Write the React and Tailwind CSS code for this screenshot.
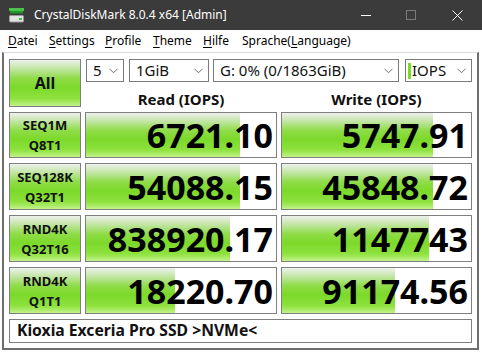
import React from "react";

const green =
  "bg-[linear-gradient(to_bottom,#eef1ec_0%,#c4e6a8_18%,#8fdc48_40%,#7cd92a_60%,#8ee23e_84%,#c2f28a_100%)]";

const rows = [
  { l1: "SEQ1M", l2: "Q8T1", read: "6721.10", rf: 0.81, write: "5747.91", wf: 0.8 },
  { l1: "SEQ128K", l2: "Q32T1", read: "54088.15", rf: 0.81, write: "45848.72", wf: 0.8 },
  { l1: "RND4K", l2: "Q32T16", read: "838920.17", rf: 0.76, write: "1147743", wf: 0.78 },
  { l1: "RND4K", l2: "Q1T1", read: "18220.70", rf: 0.47, write: "91174.56", wf: 0.6 },
];

const menu = [
  ["D", "atei", "w-[41px]"],
  ["S", "ettings", "w-[56px]"],
  ["P", "rofile", "w-[48px]"],
  ["T", "heme", "w-[50px]"],
  ["H", "ilfe", "w-[39px]"],
];

function Chevron() {
  return (
    <svg width="9" height="6" viewBox="0 0 9 6" className="shrink-0">
      <path d="M0.5 0.8 L4.5 4.8 L8.5 0.8" fill="none" stroke="#707070" strokeWidth="1" />
    </svg>
  );
}

function Select({ width, children, mark }) {
  return (
    <div
      className={`${width} h-[23px] border border-[#7a7a7a] bg-white flex items-center pr-[5px] text-[15px] text-[#111]`}
    >
      {mark && <div className="w-[3px] h-[16px] bg-[#7cd92a] ml-[2px] mr-[1px]" />}
      <span className={`flex-1 ${mark ? "" : "pl-[6px]"} leading-none whitespace-nowrap`}>{children}</span>
      <Chevron />
    </div>
  );
}

function Value({ text, fill }) {
  return (
    <div className="relative border border-[#7f7f7f] bg-white overflow-hidden">
      <div className={`absolute left-0 top-0 bottom-0 ${green}`} style={{ width: `${fill * 100}%` }} />
      <div className="relative h-full flex items-center justify-end pr-[3px] text-[34px] font-bold leading-none text-black">
        {text}
      </div>
    </div>
  );
}

export default function App() {
  return (
    <div className="w-[482px] h-[352px] bg-white flex flex-col overflow-hidden [font-family:'Noto_Sans',sans-serif]">
      {/* title bar */}
      <div className="h-[30px] bg-[#3b3b3b] flex items-center shrink-0">
        <svg width="17" height="17" viewBox="0 0 17 17" className="ml-[8px]">
          <rect x="1" y="1" width="15" height="3" fill="#4cc24c" />
          <rect x="2" y="4" width="13" height="2.5" fill="#1f9a2a" />
          <rect x="1.5" y="8.5" width="14" height="6.5" rx="1" fill="#e2e2e2" stroke="#9a9a9a" />
          <rect x="11" y="11" width="3" height="2" fill="#3ec23e" />
        </svg>
        <span className="ml-[9px] text-white text-[12px] leading-none">CrystalDiskMark 8.0.4 x64 [Admin]</span>
        <div className="flex-1" />
        <div className="w-[10px] h-px bg-white mr-[35px]" />
        <div className="w-[10px] h-[10px] border border-[#7a7a7a] mr-[36px]" />
        <svg width="11" height="11" viewBox="0 0 11 11" className="mr-[19px]">
          <path d="M0.5 0.5 L10.5 10.5 M10.5 0.5 L0.5 10.5" stroke="#fff" strokeWidth="1" />
        </svg>
      </div>

      {/* menu */}
      <div className="h-[22px] flex items-center pl-[8px] text-[12px] text-black shrink-0">
        {menu.map(([u, rest, w]) => (
          <span key={u + rest} className={`${w} whitespace-nowrap`}>
            <u className="underline-offset-2">{u}</u>
            {rest}
          </span>
        ))}
        <span className="whitespace-nowrap">
          Sprache(<u className="underline-offset-2">L</u>anguage)
        </span>
      </div>

      {/* panel */}
      <div className="flex-1 ml-[2px] mr-[3px] mb-[2px] border-2 border-t border-[#6f6f6f] border-t-[#dcdcdc] pl-[5px] pt-[6px]">
        <div className="grid grid-cols-[72px_192px_191px] grid-rows-[48px_46px_47px_47px_47px_24px] gap-x-[4px] gap-y-[5px]">
          <div className={`border border-[#7f7f7f] ${green} flex items-center justify-center text-[16px] font-bold text-[#111]`}>
            All
          </div>
          <div className="col-span-2 flex flex-col">
            <div className="flex ml-[1px]">
              <Select width="w-[38px]">5</Select>
              <div className="w-[5px]" />
              <Select width="w-[80px]">1GiB</Select>
              <div className="w-[4px]" />
              <Select width="w-[186px]">G: 0% (0/1863GiB)</Select>
              <div className="w-[6px]" />
              <Select width="w-[67px]" mark>
                IOPS
              </Select>
            </div>
            <div className="flex-1 grid grid-cols-[192px_191px] gap-x-[4px] pt-[9px] text-[15px] font-bold text-[#111]">
              <div className="text-center leading-[16px]">Read (IOPS)</div>
              <div className="text-center leading-[16px]">Write (IOPS)</div>
            </div>
          </div>

          {rows.map((r) => (
            <React.Fragment key={r.l1 + r.l2}>
              <div
                className={`border border-[#7f7f7f] ${green} flex flex-col items-center justify-center text-[13px] font-bold leading-[20px] text-[#111]`}
              >
                <span>{r.l1}</span>
                <span>{r.l2}</span>
              </div>
              <Value text={r.read} fill={r.rf} />
              <Value text={r.write} fill={r.wf} />
            </React.Fragment>
          ))}

          <div className="col-span-3 border border-[#7f7f7f] bg-white flex items-center pl-[7px] text-[15.7px] font-bold text-[#111] leading-none">
            Kioxia Exceria Pro SSD &gt;NVMe&lt;
          </div>
        </div>
      </div>
    </div>
  );
}
